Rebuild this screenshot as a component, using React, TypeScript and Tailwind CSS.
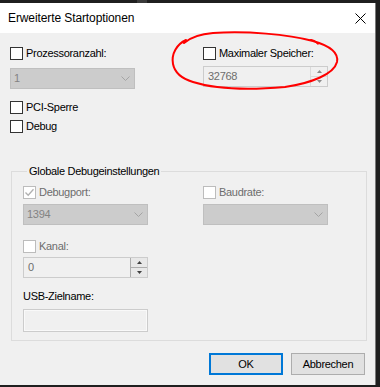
import React from "react"

function Box({ checked, disabled }: { checked?: boolean; disabled?: boolean }) {
  return (
    <span
      className={
        disabled
          ? "flex h-[13px] w-[13px] shrink-0 items-center justify-center border border-[#bcbcbc] bg-white"
          : "flex h-[13px] w-[13px] shrink-0 items-center justify-center border border-[#333333] bg-white"
      }
    >
      {checked && (
        <svg width="11" height="11" viewBox="0 0 11 11">
          <polyline points="1.5,5.5 4.2,8.3 9.5,2.2" fill="none" stroke="#b0b0b0" strokeWidth="1.3" />
        </svg>
      )}
    </span>
  )
}

function Check({ label, checked, disabled }: { label: string; checked?: boolean; disabled?: boolean }) {
  return (
    <div className="flex h-[13px] items-center">
      <Box checked={checked} disabled={disabled} />
      <span className={disabled ? "ml-[3px] leading-[13px] text-[#6d6d6d]" : "ml-[3px] leading-[13px]"}>{label}</span>
    </div>
  )
}

// disabled dropdown
function Combo({ value }: { value?: string }) {
  return (
    <div className="flex h-[21px] w-[125px] items-center justify-between border border-[#bfbfbf] bg-[#cccccc] pl-[3px] pr-[4px] text-[#838383]">
      <span className="leading-[13px]">{value}</span>
      <svg width="9" height="5" viewBox="0 0 9 5">
        <polyline points="0.5,0.5 4.5,4.5 8.5,0.5" fill="none" stroke="#a4a4a4" strokeWidth="1" />
      </svg>
    </div>
  )
}

function Spin({ value, dark }: { value: string; dark?: boolean }) {
  const arrow = dark ? "#404040" : "#8a8a8a"
  return (
    <div className="flex h-[21px] w-[125px] items-stretch border border-[#cccccc] bg-[#f0f0f0]">
      <span className="flex-1 pl-[4px] leading-[19px] text-[#6d6d6d]">{value}</span>
      <div className={dark ? "flex w-[17px] flex-col border-l border-[#adadad]" : "flex w-[17px] flex-col border-l border-[#dadada]"}>
        <div className={dark ? "flex flex-1 items-center justify-center border-b border-[#adadad] bg-[#e8e8e8]" : "flex flex-1 items-center justify-center border-b border-[#dadada]"}>
          <svg width="5" height="3" viewBox="0 0 5 3">
            <polygon points="2.5,0 5,3 0,3" fill={arrow} />
          </svg>
        </div>
        <div className={dark ? "flex flex-1 items-center justify-center bg-[#e8e8e8]" : "flex flex-1 items-center justify-center"}>
          <svg width="5" height="3" viewBox="0 0 5 3">
            <polygon points="0,0 5,0 2.5,3" fill={arrow} />
          </svg>
        </div>
      </div>
    </div>
  )
}

export default function App() {
  return (
    <div className="relative flex h-[387px] w-[380px] flex-col bg-[#1f1f1f] font-['Liberation_Sans',Arial,sans-serif] text-[11px] tracking-[-0.3px] text-black">
      {/* window top edge */}
      <div className="flex h-[3px]">
        <div className="w-[137px]" />
        <div className="w-[10px] bg-[#3a3a3a]" />
      </div>

      <div className="flex h-[382px] w-[376px] flex-col border-r border-[#7a7a7a] bg-[#f0f0f0]">
        {/* title bar */}
        <div className="flex h-[30px] items-center justify-between bg-white pl-[8px] pr-[9px]">
          <span className="text-[12px] tracking-[-0.1px]">Erweiterte Startoptionen</span>
          <svg width="11" height="11" viewBox="0 0 11 11">
            <path d="M0.5 0.5 L10.5 10.5 M10.5 0.5 L0.5 10.5" stroke="#000" strokeWidth="1" />
          </svg>
        </div>

        <div className="flex flex-1 flex-col pl-[10px] pr-[8px] pt-[14px]">
          <div className="flex">
            <div className="flex w-[193px] flex-col">
              <Check label="Prozessoranzahl:" />
              <div className="mt-[8px]">
                <Combo value="1" />
              </div>
              <div className="mt-[12px]">
                <Check label="PCI-Sperre" />
              </div>
              <div className="mt-[6px]">
                <Check label="Debug" />
              </div>
            </div>
            <div className="flex flex-col">
              <Check label="Maximaler Speicher:" />
              <div className="mt-[6px]">
                <Spin value="32768" />
              </div>
            </div>
          </div>

          {/* Globale Debugeinstellungen */}
          <div className="ml-[1px] mt-[38px] flex w-[356px] flex-col border border-[#dcdcdc] pb-[8px] pl-[11px]">
            <span className="-mt-[8px] ml-[4px] w-fit bg-[#f0f0f0] px-[2px] leading-[14px]">Globale Debugeinstellungen</span>
            <div className="mt-[8px] flex">
              <div className="flex w-[180px] flex-col">
                <Check label="Debugport:" checked disabled />
                <div className="mt-[5px]">
                  <Combo value="1394" />
                </div>
                <div className="mt-[15px]">
                  <Check label="Kanal:" disabled />
                </div>
                <div className="mt-[4px]">
                  <Spin value="0" dark />
                </div>
                <span className="mt-[12px] leading-[13px]">USB-Zielname:</span>
                <div className="mt-[6px] h-[23px] w-[125px] border border-[#cccccc] bg-[#f0f0f0] shadow-[inset_0_0_0_1px_#f9f9f9]" />
              </div>
              <div className="flex flex-col">
                <Check label="Baudrate:" disabled />
                <div className="mt-[5px]">
                  <Combo />
                </div>
              </div>
            </div>
          </div>

          <div className="mt-[12px] flex justify-end gap-[8px] pr-[2px]">
            <button className="flex h-[22px] w-[74px] items-center justify-center border-2 border-[#0078d7] bg-[#e1e1e1]">OK</button>
            <button className="flex h-[22px] w-[74px] items-center justify-center border border-[#adadad] bg-[#e1e1e1]">Abbrechen</button>
          </div>
        </div>
      </div>

      {/* hand-drawn red marker */}
      <svg className="pointer-events-none absolute left-0 top-0" width="380" height="387" viewBox="0 0 380 387">
        <path
          d="M186 40 C177 44, 171 54, 173 64 C175 74, 183 79, 193 82 C215 89, 250 90, 285 87 C312 83, 334 74, 337 62 C339 52, 327 45, 313 41 C287 34, 247 31, 213 33 C200 34, 191 37, 184 43"
          fill="none"
          stroke="#ff0000"
          strokeWidth="2"
          strokeLinecap="round"
        />
        <path d="M310 40 C314 39, 316 42, 318 44" fill="none" stroke="#ff0000" strokeWidth="1.5" strokeLinecap="round" />
      </svg>
    </div>
  )
}
